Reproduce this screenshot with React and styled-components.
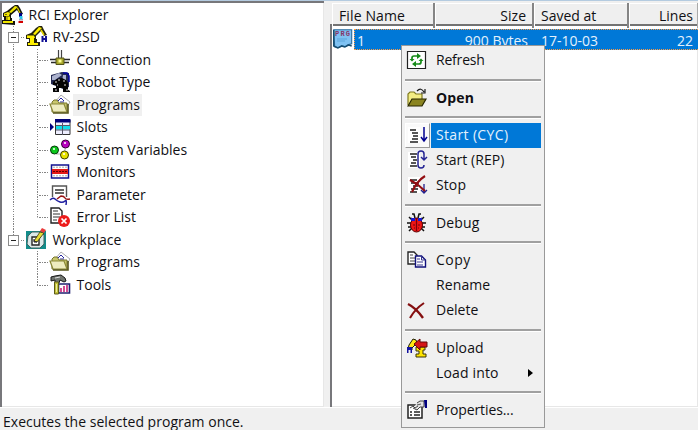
import React from 'react';
import styled, { createGlobalStyle, css } from 'styled-components';

const Global = createGlobalStyle`
  * { box-sizing: border-box; }
  body { margin: 0; overflow: hidden; background: #f0f0f0; }
`;

const Window = styled.div`
  width: 698px;
  height: 430px;
  display: flex;
  flex-direction: column;
  position: relative;
  overflow: hidden;
  background: #f0f0f0;
  border-top: 1px solid #b4cbe0;
  color: #101014;
  font: 14px/20px 'Open Sans', 'Noto Sans', sans-serif;
  white-space: nowrap;
`;
const Panes = styled.div`
  display: flex;
  flex: none;
  gap: 6px;
  height: 406px;
`;
const Pane = styled.section`
  flex: ${p => p.$width ? `0 0 ${p.$width}px` : '1'};
  min-width: 0;
  background: #fff;
  box-shadow: inset 2px 2px 0 #77777b, inset -1px -1px 0 #e7e7e7;
`;
const Tree = styled.div`padding: 2.5px 0 0 1px;`;
const TreeRow = styled.div`
  height: 22.5px;
  display: flex;
  align-items: center;
`;
const v = 'repeating-linear-gradient(180deg,#858585 0 1.25px,#fff 1.25px 2.5px)';
const h = 'repeating-linear-gradient(90deg,#858585 0 1.25px,#fff 1.25px 2.5px)';
const Guide = styled.span`
  width: 24px;
  height: 22.5px;
  flex: none;
  display: flex;
  align-items: center;
  padding-left: 7px;
  background-repeat: no-repeat;
  ${p => p.$kind === 'pipe' && css`background-image: ${v}; background-size: 1px 100%; background-position: 12px 0;`}
  ${p => p.$kind === 'tee' && css`background-image: ${v}, ${h}; background-size: 1px 100%, 12px 1px; background-position: 12px 0, 12px 11px;`}
  ${p => p.$kind === 'end' && css`background-image: ${v}, ${h}; background-size: 1px 50%, 12px 1px; background-position: 12px 0, 12px 11px;`}
`;
const Expander = styled.span`
  width: 11px;
  height: 11px;
  margin-top: 1px;
  border: 1px solid #8b8b8b;
  background: linear-gradient(#222, #222) center / 5px 1px no-repeat #fff;
`;
const IconCell = styled.span`
  width: 22px;
  height: 22px;
  flex: none;
  display: flex;
  align-items: center;
  justify-content: center;
`;
const Svg = styled.svg`width: 20px; height: 20px; display: block; flex: none; overflow: visible;`;
const Label = styled.span`
  height: 22px;
  line-height: 22px;
  padding: 0 2px 0 3.5px;
  margin-left: 2px;
  background: ${p => p.$selected ? '#f0f0f0' : 'transparent'};
`;

const Header = styled.div`
  display: grid;
  grid-template-columns: 103px 99px 95px 1fr;
  height: 25px;
  padding: 2px 0 0 2px;
  border-bottom: 2px solid #737373;
  background: #efefef;
`;
const HeadCell = styled.div`
  border-right: 2px solid #858585;
  box-shadow: inset 1px 1px #fff;
  padding: 1px 6px 0 7px;
  line-height: 24px;
  text-align: ${p => p.$right ? 'right' : 'left'};
  letter-spacing: ${p => p.$track || 0}px;
  &:last-child { border-right: 1px solid #aaa; padding-right: 4px; }
`;
const FileRow = styled.div`
  display: flex;
  height: 21px;
  margin: 3px 0 0 3px;
`;
const FileData = styled.div`
  flex: 1;
  margin-left: 1px;
  display: grid;
  grid-template-columns: 79px 99px 95px 1fr;
  background: #0078d7;
  color: #e4f1fc;
  border: 1px dotted #ff9b42;
  border-right: 0;
`;
const Value = styled.span`
  line-height: 21px;
  padding: 0 ${p => p.$right ? 5 : 2}px 0 ${p => p.$inset || 2}px;
  text-align: ${p => p.$right ? 'right' : 'left'};
`;

const Status = styled.footer`
  flex: none;
  height: 23px;
  border-top: 1px solid #fff;
  padding: 4px 3px 0;
  line-height: 20px;
  letter-spacing: .02px;
`;

/* Popup that lies over the file list */
const Menu = styled.nav`
  position: absolute;
  left: 401px;
  top: 44px;
  width: 144px;
  height: 383px;
  padding: 1.5px 3px;
  background: #f0f0f0;
  border: 1px solid #999;
`;
const MenuItem = styled.div`
  height: 25px;
  display: flex;
  align-items: center;
`;
const MenuIcon = styled.span`
  width: 25px;
  height: 25px;
  display: flex;
  align-items: center;
  padding-left: ${p => p.$active ? 1 : 2}px;
  flex: none;
  ${p => p.$active && css`background: #fafafa; border: 1px solid; border-color: #fff #999 #999 #fff;`}
`;
const MenuLabel = styled.span`
  flex: 1;
  height: 25px;
  margin-left: 1px;
  padding: 0 8px 0 5px;
  display: flex;
  align-items: center;
  justify-content: space-between;
  letter-spacing: ${p => p.$track || 0}px;
  font-weight: ${p => p.$bold ? 700 : 400};
  ${p => p.$active && css`background: #0078d7; color: #e4f1fc;`}
`;
const Separator = styled.div`
  height: 12.5px;
  padding-top: 6px;
  &::before { content: ''; display: block; height: 2px; background: #a0a0a0; border-bottom: 1px solid #fff; }
`;
const Arrow = styled.span`
  width: 0;
  height: 0;
  border: 4px solid transparent;
  border-left: 5px solid #000;
  border-right: 0;
`;

const art = {
  rci: <>
    <path d="M0 19v-4h2v-3H1V8l4-2 5-4 3-2h3l2 3 3 6-3 1-3-5-6 5v3h1v3h3v4z" fill="#15150c" />
    <path d="M1 16h10v2H1zM2 8.500l4-1.500 2 1-1 3H2zM4 11.500h4V15H4zM7 7l6-6 3 1-7 6z" fill="#f0e600" />
    <path d="M5 12v3M3 9.5h2" stroke="#76700c" /><path d="m15.500 3 2.500 5" stroke="#d8ce00" strokeWidth="1.3" />
    <path d="M17 8h3v4h-3z" fill="#000087" /><path d="M17.5 11h3v3h-3z" fill="#2bc6ea" /><path d="M16.5 16h4.5v2h-4.5z" fill="#d30000" /><path d="M17 14h4v1.5h-4z" fill="#a5a5b8" />
  </>,
  robot: <>
    <path d="M1 19v-4h2v-3H0V8l5-2 5-5 3-2h3l2 4 3 5-3 1-3-5-5 5v3h1v3h3v4z" fill="#25240c" />
    <path d="M2 16h10v2H2zM1 8.500h7L9 11H1zM4 11h4v5H4zM7 7l6-7 3 1-7 7z" fill="#fff000" />
    <path d="m15 3 3 5" stroke="#e8d600" strokeWidth="1.5" />
    <path d="M15.5 15V9h2v2h1.5V9h2v6H19v-2h-1.5v2z" fill="#101096" />
  </>,
  connection: <>
    <path d="M0 9.5h20M1 12.5h18" stroke="#292929" strokeWidth="1.3" /><path d="M8.5 0v9M11.5 0v9" stroke="#444" strokeWidth="1.2" />
    <path d="M6 8h8v6.5H6z" fill="#a6a52b" stroke="#55551b" /><path d="M8.5 9.5h3v3h-3z" fill="#ffff93" />
  </>,
  robotType: <>
    <path d="M1 3 12 0l7 1v14l-6 2L1 12z" fill="#232952" /><path d="m2 4 7-3 3 2-7 5H2zM13 3h3v6l-4 1z" fill="#adb3ce" />
    <path d="M3 13v-3l4-3 5-1 4 2 2 3v7l2 1v1h-7v-4H9v4H3v-4h3v-3z" fill="#050505" />
    <path d="M5 10h2M8 8h2M13 9h2M7 13h1M14 13h2M5 18h2M16 18h2" stroke="#ddd" /><path d="M13 1h4l2 3v6" fill="none" stroke="#0000a0" strokeWidth="1.5" />
  </>,
  folder: <>
    <path d="m6 6 5-6 9 7-3 5-10-1z" fill="#fff" stroke="#969696" strokeWidth=".8" /><path d="m8 6 3-3 3 3M10 7h4" stroke="#2424a0" fill="none" />
    <path d="M2 17V7l2-2h3l2 3h8v9z" fill="#c9c76e" stroke="#77752c" />
    <path d="M3 17 0 9h14l3 8z" fill="#eeecc0" stroke="#8a8838" strokeWidth="1.2" /><path d="M3 18h15V9" fill="none" stroke="#57551c" strokeWidth="1.6" />
  </>,
  slots: <>
    <path d="m0 6 4 4-4 4z" fill="#000080" /><path d="M5.5 3h14.5v14.5H5.5z" fill="#eef" stroke="#333" /><path d="M5 2h15.5v3.5H5z" fill="#000078" />
    <path d="M6 9h14v3.5H6z" fill="#10dce9" /><path d="M6 8.5h14M6 13h14M12.5 6v12" stroke="#556" />
  </>,
  variables: <>
    <path d="M6 14h5M15 8v3" stroke="#b0b0b0" />
    <circle cx="15.5" cy="4" r="4" fill="#b900c0" stroke="#350035" /><circle cx="4.5" cy="10" r="4" fill="#0bc81b" stroke="#05360a" /><circle cx="14.5" cy="15" r="4" fill="#e8e300" stroke="#3f3e00" />
    <path d="M14 3h2M3 9h2M13 14h2" stroke="#fff" strokeWidth="1.6" />
  </>,
  monitors: <>
    <path d="M1.5 3h17v13h-17z" fill="#fff" stroke="#101090" strokeWidth="1.5" /><path d="M2 7h16v5H2z" fill="#e41919" />
    <path d="M3 5.2h14M3 13.8h14" stroke="#aaa" strokeDasharray="2 1" /><path d="M3 9.5h14" stroke="#630000" strokeDasharray="2 1" />
  </>,
  parameter: <>
    <path d="M2.5 12V1h14v11" fill="#fff" stroke="#555" strokeWidth="1.4" /><path d="M5 5h9M5 8h9" stroke="#333" strokeWidth="1.3" />
    <path d="M0 15q3-3 5-1t5 3 5-1 1 4" fill="none" stroke="#2020a0" strokeWidth="1.5" /><path d="m7 14 4-3q3 0 4 2t5 1" fill="none" stroke="#981414" strokeWidth="1.5" />
  </>,
  error: <>
    <path d="M1 1h8l3 3v12H1z" fill="#fff" stroke="#222" strokeWidth="1.4" /><path d="M3 4h5M3 7h7M3 10h7M3 13h4" stroke="#333" strokeWidth="1.2" />
    <circle cx="14" cy="14" r="6" fill="#ed1c1c" /><path d="m11.5 11.5 5 5m0-5-5 5" stroke="#fff" strokeWidth="1.7" />
  </>,
  workplace: <>
    <path d="M0 1h20v18H0z" fill="#138c8a" /><path d="M2 6 6 2h9l3 3v9l-4 4H5l-4-4z" fill="#dce8e8" stroke="#426463" />
    <path d="M6 7h7v8H6z" fill="#fff" stroke="#252525" strokeWidth="1.4" /><path d="m8 11 6-9 4 1-7 9z" fill="#e8dc36" stroke="#33300c" strokeWidth=".8" />
    <path d="m14 1 2-3 4 2-2 3z" fill="#e93c3c" /><path d="m8 9 0 3 3 0" fill="none" stroke="#111" />
  </>,
  tools: <>
    <path d="M8.5 9h11v9h-11z" fill="#fff" stroke="#202070" strokeWidth="1.6" /><path d="M11 13v4M14 11v6M17 10v7" stroke="#cc2e80" strokeWidth="1.7" />
    <path d="m1 2 4-1 6-1 4 3 1 3-2 1-4-2-1 3H5V5L1 6z" fill="#70756f" stroke="#161616" /><path d="m5 3 5-1" stroke="#e1e1e1" /><path d="M4.5 7h4v12h-4z" fill="#c1c037" stroke="#5c5b17" /><path d="M6 9h1v8H6z" fill="#ececa2" />
  </>,
  refresh: <>
    <path d="M.5 1.5h18v17H.5z" fill="#fff" stroke="#222" strokeWidth="1.2" />
    <path d="M5 9V8q0-2 2-2h4M14 11v1q0 2-2 2H8" fill="none" stroke="#168b18" strokeWidth="1.7" /><path d="m10 3 4 3-4 3zM9 11l-4 3 4 3zM2.500 9h5l-2.500 2.500zM11.500 11h5L14 8.500z" fill="#168b18" />
  </>,
  open: <>
    <path d="M1 17V6l2-2h4l2 2h6v5" fill="#f3ed83" stroke="#807b20" strokeWidth="1.2" /><path d="m1 18 4-7h14l-4 7z" fill="#8a8420" stroke="#282700" strokeWidth="1.2" />
    <path d="M10 3q4-4 7 1M18 1v4h-4" fill="none" stroke="#181818" strokeWidth="1.2" />
  </>,
  cyc: <><path d="M1 2h12v16H1z" fill="#fff" /><path d="M3 5h6M5 8h6M6 11h5M5 14h6M3 17h8" stroke="#202020" strokeWidth="1.5" /><path d="M17 2v14m-3-4 3 4 3-4" fill="none" stroke="#000090" strokeWidth="1.5" /></>,
  rep: <><path d="M1 2h12v16H1z" fill="#fff" /><path d="M3 4h7M4 7h5M6 10h4M4 13h5M3 16h7" stroke="#202020" strokeWidth="1.5" /><path d="M17 9V4q0-3-3-3t-3 3v11q0 3 3 3t3-3m-3-8 3 3 3-3" fill="none" stroke="#242494" strokeWidth="1.5" /></>,
  stop: <><path d="M1 2h12v16H1z" fill="#fff" /><path d="M3 5h7M4 8h8M6 11h5M4 14h7M3 17h7" stroke="#202020" strokeWidth="1.5" /><path d="M17 9v9m-3-3 3 3 3-3" fill="none" stroke="#202090" strokeWidth="1.3" /><path d="m3 5 7 4 8 7M18 1Q10 6 5 17" fill="none" stroke="#930e12" strokeWidth="2.1" /></>,
  bug: <>
    <path d="m4 5 3 3M15 5l-3 3M0 10h19M1 14h17M2 18l4-4m11 4-4-4M2 4l4 4M17 4l-4 4M5 1h2l1 4M14 1h-2l-1 4" stroke="#111" strokeWidth="1.5" fill="none" />
    <ellipse cx="9.500" cy="12" rx="6" ry="7" fill="#ed1515" stroke="#5a0000" /><path d="M4 5h4v3H4zm7 0h4v3h-4z" fill="#1717d1" /><path d="M9.500 5v13M6 12h2m3 0h2M7 15h1m3 0h1" stroke="#78000a" strokeWidth="1.2" />
  </>,
  copy: <>
    <path d="M1 2h6l3 3v9H1z" fill="#fff" stroke="#252525" strokeWidth="1.4" /><path d="M3 5h3M3 8h5M3 11h5" stroke="#444" />
    <path d="M8.500 6h6l4 4v7h-10z" fill="#fff" stroke="#10107b" strokeWidth="1.4" /><path d="M14.500 6v4h4M10 9h3M10 12h6M10 15h6" fill="none" stroke="#34348d" />
  </>,
  delete: <><path d="M1 4q8 4 15 14" fill="none" stroke="#850f10" strokeWidth="2.4" /><path d="M17 3Q8 9 3 18" fill="none" stroke="#850f10" strokeWidth="2.1" /></>,
  upload: <>
    <path d="M1 11 2 7l4-6 3 1 1 3-5 5v2" fill="#ffe713" stroke="#201f0a" /><path d="M0 15V9h5v6H3.500v-3h-2v3z" fill="#1212a0" />
    <path d="M9 9h9v3h-2v4h3v3H9v-3h3v-3H9z" fill="#ffe400" stroke="#39350a" /><path d="m7 6 6-5v3h7v5h-7v3z" fill="#d51717" stroke="#650b0b" />
  </>,
  properties: <>
    <path d="M1 5h14v13H1z" fill="#fff" stroke="#222" strokeWidth="1.5" /><path d="M3 12h2m2 0h6M3 15h2m2 0h6" stroke="#252525" strokeWidth="1.5" />
    <path d="m3 8 3-2 2 2 3-2M10 3l3-2h4v6h-4l-3 3-4-2" fill="#e3e3e3" stroke="#444" /><path d="M17 0h3v8h-2z" fill="#000080" /><path d="m10 5 4-1" stroke="#555" />
  </>,
  prg: <>
    <path d="M.7.7h18v14l-4 1-2 2-4-1-3 2-4-1z" fill="#7fc2f3" stroke="#286a9c" strokeWidth="1.1" /><path d="M.7 1v16l4 2 4-2 3 1 4-2 3 1" fill="none" stroke="#174e72" strokeWidth="1.4" />
    <path d="M4 10h10M4 12h8" stroke="#5ca5db" /><text x="2" y="7" fontFamily="Liberation Mono" fontWeight="700" fontSize="7" textLength="15" fill="#853568">PRG</text>
  </>,
};
const Icon = ({ name }) => <Svg viewBox="0 0 20 20">{art[name]}</Svg>;

const rows = [
  [[], 'rci', 'RCI Explorer'],
  [['box'], 'robot', 'RV-2SD'],
  [['pipe', 'tee'], 'connection', 'Connection'],
  [['pipe', 'tee'], 'robotType', 'Robot Type'],
  [['pipe', 'tee'], 'folder', 'Programs', true],
  [['pipe', 'tee'], 'slots', 'Slots'],
  [['pipe', 'tee'], 'variables', 'System Variables'],
  [['pipe', 'tee'], 'monitors', 'Monitors'],
  [['pipe', 'tee'], 'parameter', 'Parameter'],
  [['pipe', 'end'], 'error', 'Error List'],
  [['lastBox'], 'workplace', 'Workplace'],
  [['blank', 'tee'], 'folder', 'Programs'],
  [['blank', 'end'], 'tools', 'Tools'],
];
const items = [
  ['refresh', 'Refresh', -0.2], null,
  ['open', 'Open', 0.15], null,
  ['cyc', 'Start (CYC)', 0.35], ['rep', 'Start (REP)', 0.05], ['stop', 'Stop', 0.1], null,
  ['bug', 'Debug', 0.15], null,
  ['copy', 'Copy', 0.5], [null, 'Rename', 0.1], ['delete', 'Delete', 0], null,
  ['upload', 'Upload', 0.1], [null, 'Load into', 0.15], null,
  ['properties', 'Properties...', -0.1],
];

export default function App() {
  return (
    <Window>
      <Global />
      <Panes>
        <Pane $width={324}>
          <Tree>
            {rows.map(([guides, icon, text, selected], i) => (
              <TreeRow key={i}>
                {guides.map((g, j) => g === 'box' || g === 'lastBox'
                  ? <Guide key={j} $kind={g === 'box' ? 'tee' : 'end'}><Expander /></Guide>
                  : <Guide key={j} $kind={g} />)}
                <IconCell><Icon name={icon} /></IconCell>
                <Label $selected={selected}>{text}</Label>
              </TreeRow>
            ))}
          </Tree>
        </Pane>
        <Pane>
          <Header>
            <HeadCell $track={0.12}>File Name</HeadCell>
            <HeadCell $right>Size</HeadCell>
            <HeadCell>Saved at</HeadCell>
            <HeadCell $right>Lines</HeadCell>
          </Header>
          <FileRow>
            <Icon name="prg" />
            <FileData>
              <Value>1</Value>
              <Value $right>900 Bytes</Value>
              <Value $inset={8}>17-10-03</Value>
              <Value $right>22</Value>
            </FileData>
          </FileRow>
        </Pane>
      </Panes>
      <Status>Executes the selected program once.</Status>
      <Menu>
        {items.map((it, i) => it ? (
          <MenuItem key={i}>
            <MenuIcon $active={it[0] === 'cyc'}>{it[0] && <Icon name={it[0]} />}</MenuIcon>
            <MenuLabel $active={it[0] === 'cyc'} $bold={it[0] === 'open'} $track={it[2]}>
              {it[1]}{it[1] === 'Load into' && <Arrow />}
            </MenuLabel>
          </MenuItem>
        ) : <Separator key={i} />)}
      </Menu>
    </Window>
  );
}
